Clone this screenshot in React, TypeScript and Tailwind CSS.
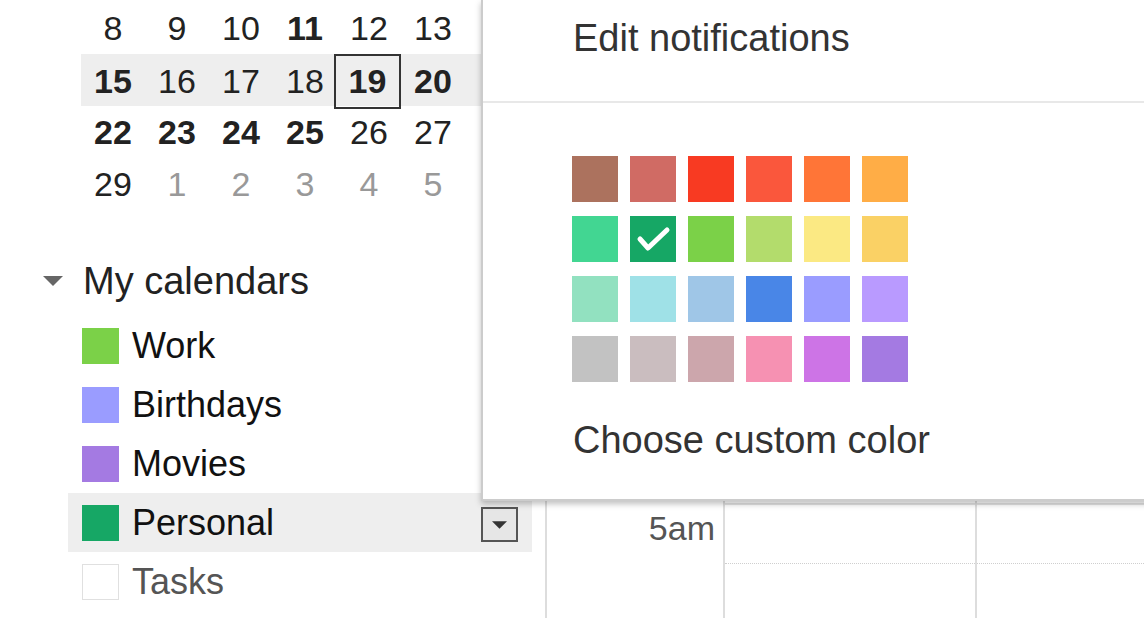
import React from "react";

type Day = { n: number; bold?: boolean; muted?: boolean; today?: boolean };

const weeks: Day[][] = [
  [{ n: 8 }, { n: 9 }, { n: 10 }, { n: 11, bold: true }, { n: 12 }, { n: 13 }],
  [
    { n: 15, bold: true },
    { n: 16 },
    { n: 17 },
    { n: 18 },
    { n: 19, bold: true, today: true },
    { n: 20, bold: true },
  ],
  [
    { n: 22, bold: true },
    { n: 23, bold: true },
    { n: 24, bold: true },
    { n: 25, bold: true },
    { n: 26 },
    { n: 27 },
  ],
  [
    { n: 29 },
    { n: 1, muted: true },
    { n: 2, muted: true },
    { n: 3, muted: true },
    { n: 4, muted: true },
    { n: 5, muted: true },
  ],
];

const calendars = [
  { name: "Work", color: "bg-[#7bd148]" },
  { name: "Birthdays", color: "bg-[#9a9cff]" },
  { name: "Movies", color: "bg-[#a47ae2]" },
  { name: "Personal", color: "bg-[#16a765]", active: true },
  { name: "Tasks", color: "bg-white border border-[#e0e0e0]", muted: true },
];

const palette = [
  ["bg-[#ac725e]", "bg-[#d06b64]", "bg-[#f83a22]", "bg-[#fa573c]", "bg-[#ff7537]", "bg-[#ffad46]"],
  ["bg-[#42d692]", "bg-[#16a765]", "bg-[#7bd148]", "bg-[#b3dc6c]", "bg-[#fbe983]", "bg-[#fad165]"],
  ["bg-[#92e1c0]", "bg-[#9fe1e7]", "bg-[#9fc6e7]", "bg-[#4986e7]", "bg-[#9a9cff]", "bg-[#b99aff]"],
  ["bg-[#c2c2c2]", "bg-[#cabdbf]", "bg-[#cca6ac]", "bg-[#f691b2]", "bg-[#cd74e6]", "bg-[#a47ae2]"],
];

// index of the currently chosen colour in the flat palette
const selectedIndex = 7;

// rows behind the menu carry no visible label
const hours = ["", "", "", "", "5am"];

const DownTriangle = ({ className }: { className?: string }) => (
  <svg viewBox="0 0 20 10" className={className}>
    <polygon points="0,0 20,0 10,10" fill="currentColor" />
  </svg>
);

const MiniCalendar = () => (
  <div className="ml-[81px] pt-[2px]">
    {weeks.map((week, i) => (
      <div
        key={i}
        className={`grid grid-cols-[repeat(7,64px)] h-[52px] ${i === 1 ? "bg-[#eeeeee]" : ""}`}
      >
        {week.map((d) => (
          <div
            key={d.n}
            className={`flex items-center justify-center text-[34px] ${
              d.bold ? "font-bold" : ""
            } ${d.muted ? "text-[#999]" : "text-[#222]"} ${
              d.today ? "border-2 border-[#333] -ml-[3px]" : ""
            }`}
          >
            {d.n}
          </div>
        ))}
      </div>
    ))}
  </div>
);

const CalendarList = () => (
  <div className="mt-[51px]">
    <div className="flex items-center h-[40px]">
      <DownTriangle className="w-[20px] h-[10px] ml-[43px] text-[#666]" />
      <span className="ml-[20px] text-[38px] text-[#222] leading-none">My calendars</span>
    </div>
    <div className="mt-[15px]">
      {calendars.map((c) => (
        <div
          key={c.name}
          className={`ml-[68px] w-[464px] h-[59px] pl-[14px] pr-[14px] flex items-center ${
            c.active ? "bg-[#eeeeee]" : ""
          }`}
        >
          <div className={`w-[37px] h-[36px] shrink-0 ${c.color}`} />
          <span
            className={`ml-[13px] text-[36px] leading-none ${
              c.muted ? "text-[#555]" : "text-[#111]"
            }`}
          >
            {c.name}
          </span>
          {c.active && (
            <button className="ml-auto mt-[4px] w-[37px] h-[35px] border-2 border-[#555] bg-[#e6e6e6] flex items-center justify-center">
              <DownTriangle className="w-[15px] h-[8px] text-[#333]" />
            </button>
          )}
        </div>
      ))}
    </div>
  </div>
);

const DayGrid = () => (
  <div className="flex-1 flex border-l-2 border-[#dddddd] pt-[15px]">
    <div className="w-[178px] shrink-0 border-r-2 border-[#dddddd]">
      {hours.map((h, i) => (
        <div key={i} className="h-[122px] pr-[8px] text-right text-[34px] text-[#555] leading-none pt-[8px]">
          {h}
        </div>
      ))}
    </div>
    {[0, 1].map((col) => (
      <div
        key={col}
        className={`shrink-0 ${col === 0 ? "w-[252px] border-r-2 border-[#dddddd]" : "flex-1"}`}
      >
        {hours.map((_, i) => (
          <div key={i} className="h-[122px] border-t-2 border-[#e4e4e4]">
            <div className="h-[59px] border-b border-dotted border-[#cfcfcf]" />
          </div>
        ))}
      </div>
    ))}
  </div>
);

const ColorMenu = () => (
  <div className="absolute left-[481px] top-0 w-[700px] h-[501px] bg-white border-l-2 border-b-2 border-[#cccccc] shadow-[0_3px_6px_rgba(0,0,0,0.25)]">
    <div className="pl-[90px] pt-[16px] h-[101px] text-[38px] leading-[44px] text-[#333]">
      Edit notifications
    </div>
    <div className="h-[2px] bg-[#e8e8e8]" />
    <div className="pl-[89px] pt-[53px] grid grid-cols-[repeat(6,46px)] gap-x-[12px] gap-y-[14px]">
      {palette.flat().map((c, i) => (
        <div key={i} className={`w-[46px] h-[46px] ${c} flex items-center justify-center`}>
          {i === selectedIndex && (
            <svg viewBox="0 0 46 46" className="w-[46px] h-[46px]">
              <polyline
                points="10,23 18,32 37,14"
                fill="none"
                stroke="white"
                strokeWidth="5"
                strokeLinecap="round"
                strokeLinejoin="round"
              />
            </svg>
          )}
        </div>
      ))}
    </div>
    <div className="pl-[90px] mt-[36px] text-[38px] leading-[44px] text-[#333]">
      Choose custom color
    </div>
  </div>
);

export default function App() {
  return (
    <div
      className="relative w-[1144px] h-[618px] overflow-hidden bg-white flex"
      style={{ fontFamily: '"Liberation Sans", Arial, sans-serif' }}
    >
      <div className="w-[545px] shrink-0">
        <MiniCalendar />
        <CalendarList />
      </div>
      <DayGrid />
      <ColorMenu />
    </div>
  );
}
